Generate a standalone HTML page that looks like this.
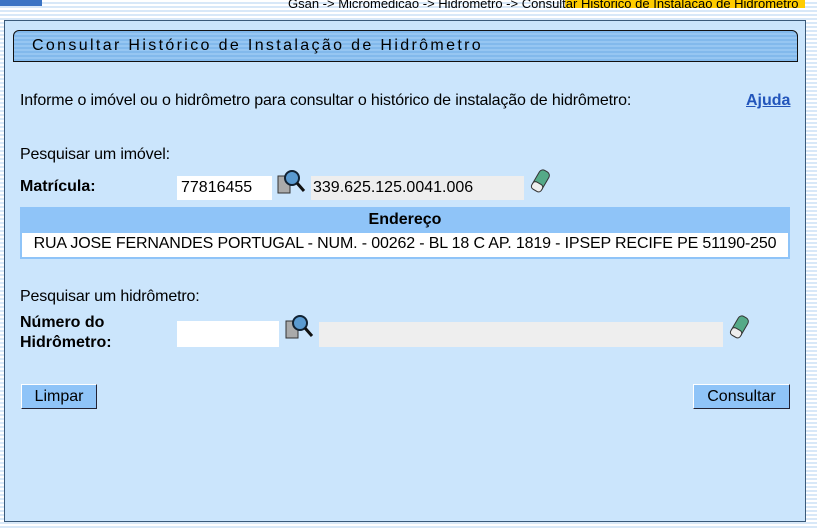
<!DOCTYPE html>
<html><head><meta charset="utf-8"><style>
*{margin:0;padding:0;box-sizing:border-box}
body{width:817px;height:530px;overflow:hidden;font-family:"Liberation Sans",sans-serif;font-size:16px;color:#000;position:relative;
background:repeating-linear-gradient(#fff 0 2px,#d8e8f8 2px 4px);}
.a{position:absolute;white-space:nowrap}
#panel{position:absolute;left:4px;top:20px;width:802px;height:502px;background:#cbe5fc;border:1px solid #3a5a7a}
#title{position:absolute;left:13px;top:30px;width:785px;height:32px;border:1px solid #111;border-radius:6px 6px 0 0;
background:repeating-linear-gradient(#82b9ec 0 2px,#96c6f2 2px 4px);font-size:16px;letter-spacing:2.35px;padding:6px 0 0 18px}
.in{position:absolute;background:#fff;height:24px;font-size:16px;padding:3px 4px}
.ro{position:absolute;background:#eee;height:24px;font-size:16px;padding:3px 2px}
.btn{position:absolute;height:25px;background:#8fc4f8;border:1px solid;border-color:#fff #223 #223 #fff;font-size:16px;text-align:center;padding-top:3px}
</style></head><body>
<div style="position:absolute;left:0;top:0;width:42px;height:6px;background:#3b73c4"></div>
<div style="position:absolute;left:565px;top:0;width:240px;height:8px;background:#ffcc00"></div>
<div class="a" style="left:288px;top:-4px;font-size:13px;color:#000">Gsan -&gt; Micromedicao -&gt; Hidrometro -&gt; Consultar Historico de Instalacao de Hidrometro</div>
<div id="panel"></div>
<div id="title">Consultar Histórico de Instalação de Hidrômetro</div>
<div class="a" style="left:20px;top:92px;letter-spacing:-0.15px">Informe o imóvel ou o hidrômetro para consultar o histórico de instalação de hidrômetro:</div>
<div class="a" style="left:746px;top:92px;font-weight:bold;color:#2255bb;text-decoration:underline">Ajuda</div>
<div class="a" style="left:20px;top:146px;letter-spacing:-0.15px">Pesquisar um imóvel:</div>
<div class="a" style="left:20px;top:178px;font-weight:bold">Matrícula:</div>
<div class="in" style="left:177px;top:176px;width:95px">77816455</div>
<svg class="a" style="left:276px;top:168px" width="32" height="28" viewBox="0 0 32 28"><rect x="2" y="8" width="12" height="17" fill="#aaa" stroke="#333"/><circle cx="16" cy="10" r="7" fill="#5a9ad0" stroke="#123" stroke-width="2"/><line x1="21" y1="15" x2="28" y2="23" stroke="#111" stroke-width="3"/></svg>
<div class="ro" style="left:311px;top:176px;width:213px">339.625.125.0041.006</div>
<svg class="a" style="left:528px;top:167px" width="26" height="30" viewBox="0 0 26 30"><rect x="7" y="3" width="11" height="22" rx="4" transform="rotate(30 13 14)" fill="#5a8" stroke="#333"/><rect x="7" y="17" width="11" height="8" rx="3" transform="rotate(30 13 14)" fill="#eee" stroke="#333"/></svg>
<div style="position:absolute;left:20px;top:207px;width:770px;height:52px;background:#fff;border:2px solid #8fc4f8"></div>
<div class="a" style="left:22px;top:209px;width:766px;height:24px;background:#8fc4f8;text-align:center;font-weight:bold;padding-top:2px">Endereço</div>
<div class="a" style="left:22px;top:235px;width:766px;text-align:center;font-size:16px;letter-spacing:-0.15px">RUA JOSE FERNANDES PORTUGAL - NUM. - 00262 - BL 18 C AP. 1819 - IPSEP RECIFE PE 51190-250</div>
<div class="a" style="left:20px;top:288px;letter-spacing:-0.15px">Pesquisar um hidrômetro:</div>
<div class="a" style="left:20px;top:313px;font-weight:bold;line-height:20px">Número do<br>Hidrômetro:</div>
<div class="in" style="left:177px;top:321px;width:102px;height:26px"></div>
<svg class="a" style="left:284px;top:313px" width="32" height="28" viewBox="0 0 32 28"><rect x="2" y="8" width="12" height="17" fill="#aaa" stroke="#333"/><circle cx="16" cy="10" r="7" fill="#5a9ad0" stroke="#123" stroke-width="2"/><line x1="21" y1="15" x2="28" y2="23" stroke="#111" stroke-width="3"/></svg>
<div class="ro" style="left:319px;top:322px;width:404px;height:25px"></div>
<svg class="a" style="left:727px;top:313px" width="26" height="30" viewBox="0 0 26 30"><rect x="7" y="3" width="11" height="22" rx="4" transform="rotate(30 13 14)" fill="#5a8" stroke="#333"/><rect x="7" y="17" width="11" height="8" rx="3" transform="rotate(30 13 14)" fill="#eee" stroke="#333"/></svg>
<div class="btn" style="left:21px;top:384px;width:76px">Limpar</div>
<div class="btn" style="left:693px;top:384px;width:97px">Consultar</div>
</body></html>
